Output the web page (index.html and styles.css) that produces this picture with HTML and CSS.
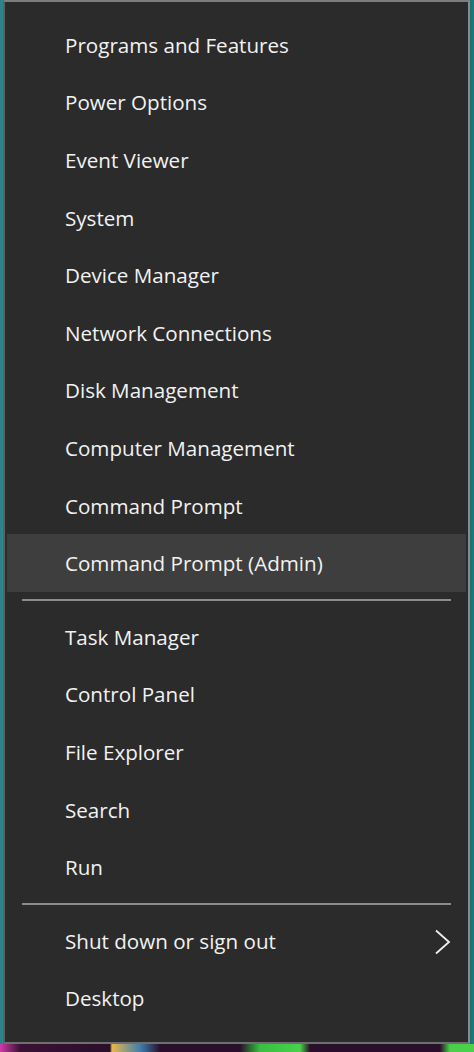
FILE: index.html
```html
<!DOCTYPE html>
<html lang="en">
<head>
<meta charset="utf-8">
<title>Quick Link Menu</title>
<link rel="stylesheet" href="styles.css">
</head>
<body>
<div class="desktop">
  <nav class="menu">
    <ul class="group">
      <li class="item">Programs and Features</li>
      <li class="item">Power Options</li>
      <li class="item">Event Viewer</li>
      <li class="item">System</li>
      <li class="item">Device Manager</li>
      <li class="item">Network Connections</li>
      <li class="item">Disk Management</li>
      <li class="item">Computer Management</li>
      <li class="item">Command Prompt</li>
      <li class="item active">Command Prompt (Admin)</li>
    </ul>
    <div class="sep"></div>
    <ul class="group">
      <li class="item">Task Manager</li>
      <li class="item">Control Panel</li>
      <li class="item">File Explorer</li>
      <li class="item">Search</li>
      <li class="item">Run</li>
    </ul>
    <div class="sep"></div>
    <ul class="group">
      <li class="item has-sub">Shut down or sign out
        <svg class="chev" width="18" height="26" viewBox="0 0 18 26"><path d="M2 1.5 L15 13 L2 24.5" fill="none" stroke="#f0f0f0" stroke-width="1.8"/></svg>
      </li>
      <li class="item">Desktop</li>
    </ul>
  </nav>
  <div class="taskbar"></div>
</div>
</body>
</html>
```
FILE: styles.css
```css
html, body {
  margin: 0;
  padding: 0;
}
body {
  width: 474px;
  height: 1052px;
  overflow: hidden;
  background: linear-gradient(to right, #2f7f86 0, #2a8a92 3px, #1d6e76 470px, #1b7b83 474px);
  font-family: "Open Sans", "Noto Sans", sans-serif;
}
.desktop {
  display: flex;
  flex-direction: column;
  height: 1052px;
}
.menu {
  margin-left: 3px;
  width: 459px;
  background: #2b2b2b;
  border: 2px solid #6f6f6f;
  border-top-color: #7d7d7d;
  border-left-color: #5f5f5f;
  border-right-color: #8a8a8a;
  padding: 14px 2px 15px 2px;
}
.group {
  list-style: none;
  margin: 0;
  padding: 0;
}
.item {
  height: 57.6px;
  display: flex;
  align-items: center;
  padding-left: 58px;
  padding-right: 14px;
  color: #f2f2f2;
  font-size: 20.6px;
  letter-spacing: 0;
  justify-content: space-between;
}
.item.active {
  background: #3e3e3e;
}
.sep {
  height: 2px;
  background: #8c8c8c;
  margin: 7px 15px 7px 15px;
}
.chev {
  display: block;
  margin-top: 2px;
}
.taskbar {
  flex: 1;
  background: linear-gradient(to right, #d43aa8 0, #3a1136 20px, #2a0f2a 110px, #e6b84a 112px, #3f7fb0 140px, #2a0f2a 160px, #2a0f2a 240px, #38c040 260px, #47d24a 300px, #2a0f2a 310px, #2a0f2a 440px, #4ad14a 450px);
}
```
